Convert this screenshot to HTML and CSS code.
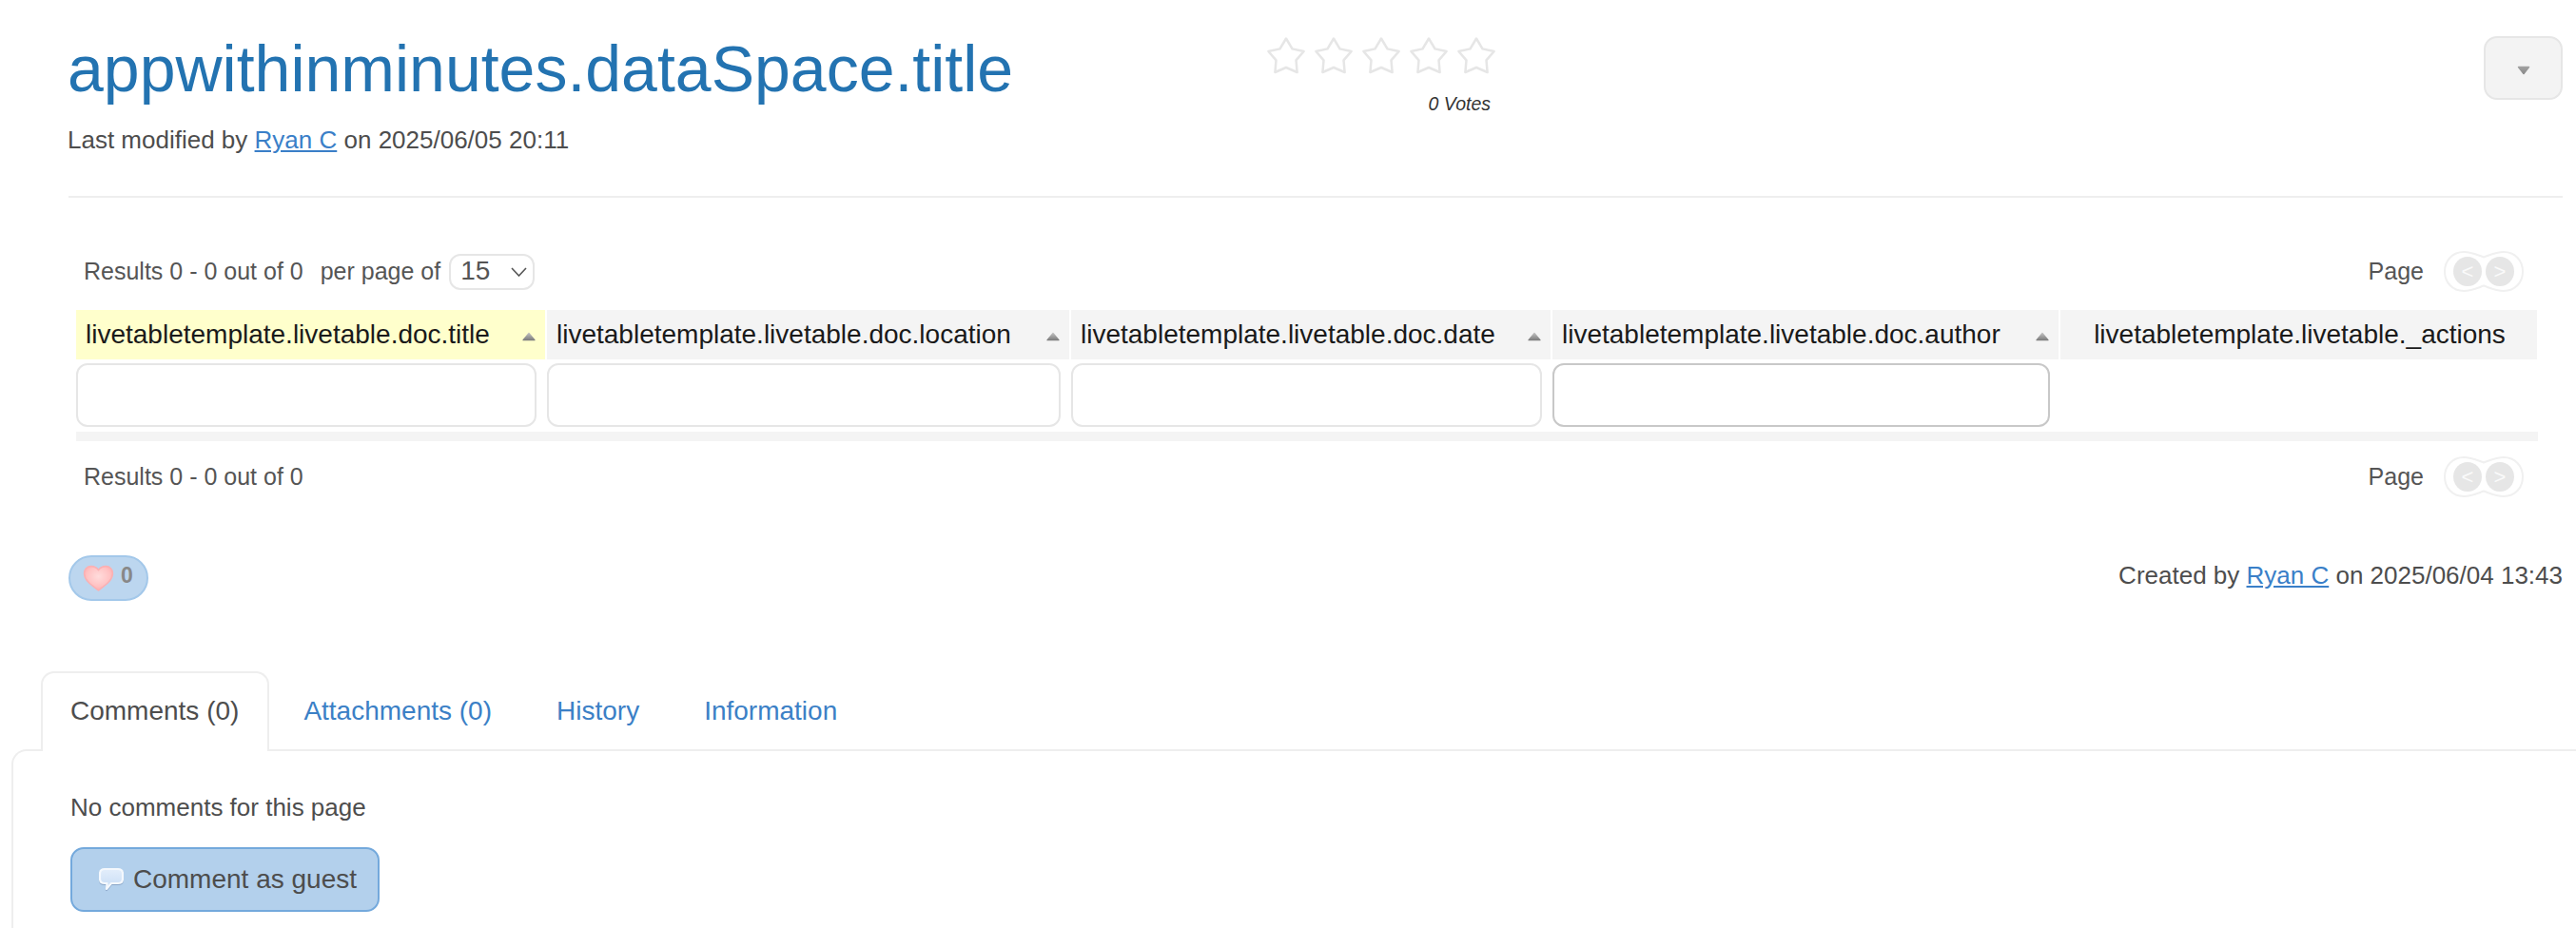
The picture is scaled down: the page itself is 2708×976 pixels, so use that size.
FILE: index.html
```html
<!DOCTYPE html>
<html lang="en">
<head>
<meta charset="utf-8">
<title>appwithinminutes.dataSpace.title</title>
<link rel="stylesheet" href="styles.css">
</head>
<body>
<svg class="defs" width="0" height="0" aria-hidden="true">
  <defs>
    <linearGradient id="sortGrad" x1="0" y1="0" x2="0" y2="1">
      <stop offset="0" stop-color="#bdbdbd"/><stop offset="1" stop-color="#7d7d7d"/>
    </linearGradient>
    <linearGradient id="caretGrad" x1="0" y1="0" x2="0" y2="1">
      <stop offset="0" stop-color="#a0a0a0"/><stop offset="1" stop-color="#8a8a8a"/>
    </linearGradient>
    <radialGradient id="heartGrad" cx="0.5" cy="0.42" r="0.62">
      <stop offset="0" stop-color="#ffdcdc"/><stop offset="0.65" stop-color="#ffc2c3"/><stop offset="1" stop-color="#ffa9ac"/>
    </radialGradient>
    <linearGradient id="bubbleGrad" x1="0" y1="0" x2="0" y2="1">
      <stop offset="0" stop-color="#e3eefb"/><stop offset="1" stop-color="#c7dcf5"/>
    </linearGradient>
    <symbol id="star" viewBox="0 0 42 42">
      <path d="M21 2.5 L27.5 13.4 L39.6 16 L31.5 25.4 L32.6 38 L21 33 L9.4 38 L10.5 25.4 L2.4 16 L14.5 13.4 Z"/>
    </symbol>
    <symbol id="sort" viewBox="0 0 14 10">
      <path d="M7 1.5 L13 8.7 L1 8.7 Z" fill="url(#sortGrad)" stroke="url(#sortGrad)" stroke-width="1.2" stroke-linejoin="round"/>
    </symbol>
    <symbol id="peanut" viewBox="0 0 84 43">
      <path d="M21 1 C29 1 35 4 42 6.5 C49 4 55 1 63 1 C75 1 83 10 83 21.5 C83 33 75 42 63 42 C55 42 49 39 42 36.5 C35 39 29 42 21 42 C9 42 1 33 1 21.5 C1 10 9 1 21 1 Z" fill="#fff" stroke="#f0f0f0" stroke-width="2"/>
    </symbol>
  </defs>
</svg>
<div class="page">
  <header class="head">
    <div class="head-main">
      <h1 class="title">appwithinminutes.dataSpace.title</h1>
      <p class="meta">Last modified by <a class="link" href="#">Ryan C</a> on 2025/06/05 20:11</p>
    </div>
    <div class="rating">
      <div class="stars">
        <svg class="star"><use href="#star"/></svg>
        <svg class="star"><use href="#star"/></svg>
        <svg class="star"><use href="#star"/></svg>
        <svg class="star"><use href="#star"/></svg>
        <svg class="star"><use href="#star"/></svg>
      </div>
      <div class="votes">0 Votes</div>
    </div>
    <button class="menu-btn" type="button" aria-label="menu">
      <svg class="menu-caret" viewBox="0 0 14 10"><path d="M1.5 1.5 L12.5 1.5 L7 8.5 Z" fill="url(#caretGrad)" stroke="url(#caretGrad)" stroke-width="1.5" stroke-linejoin="round"/></svg>
    </button>
  </header>
  <hr class="rule">

  <section class="live">
    <div class="bar">
      <div class="bar-left">
        <span>Results 0 - 0 out of 0</span>
        <span class="perpage">per page of</span>
        <span class="select">15<svg class="chev" viewBox="0 0 17 10"><path d="M1 1 L8.5 9 L16 1" fill="none" stroke="#555" stroke-width="1.6"/></svg></span>
      </div>
      <div class="bar-right">
        <span class="page-label">Page</span>
        <span class="pager">
          <svg class="pager-shape"><use href="#peanut"/></svg>
          <span class="pager-btn">&lt;</span>
          <span class="pager-btn">&gt;</span>
        </span>
      </div>
    </div>

    <div class="grid">
      <div class="th th-first"><span>livetabletemplate.livetable.doc.title</span><svg class="sort"><use href="#sort"/></svg></div>
      <div class="th"><span>livetabletemplate.livetable.doc.location</span><svg class="sort"><use href="#sort"/></svg></div>
      <div class="th"><span>livetabletemplate.livetable.doc.date</span><svg class="sort"><use href="#sort"/></svg></div>
      <div class="th"><span>livetabletemplate.livetable.doc.author</span><svg class="sort"><use href="#sort"/></svg></div>
      <div class="th th-center"><span>livetabletemplate.livetable._actions</span></div>
      <div class="td"><input class="filter" type="text"></div>
      <div class="td"><input class="filter" type="text"></div>
      <div class="td"><input class="filter" type="text"></div>
      <div class="td"><input class="filter filter-focus" type="text"></div>
      <div class="td"></div>
    </div>
    <div class="grid-foot"></div>

    <div class="bar bar-bottom">
      <div class="bar-left"><span>Results 0 - 0 out of 0</span></div>
      <div class="bar-right">
        <span class="page-label">Page</span>
        <span class="pager">
          <svg class="pager-shape"><use href="#peanut"/></svg>
          <span class="pager-btn">&lt;</span>
          <span class="pager-btn">&gt;</span>
        </span>
      </div>
    </div>
  </section>

  <div class="after">
    <span class="like">
      <svg class="heart" viewBox="0 0 32 28"><path d="M16 26 C10 21.5 2 16.5 1.5 9 C1.2 4.5 4.5 1.5 8.5 1.5 C11.8 1.5 14.6 3 16 5.5 C17.4 3 20.2 1.5 23.5 1.5 C27.5 1.5 30.8 4.5 30.5 9 C30 16.5 22 21.5 16 26 Z" fill="url(#heartGrad)" stroke="#fbb0b3" stroke-width="1.5" stroke-linejoin="round"/></svg>
      <span class="like-count">0</span>
    </span>
    <p class="created">Created by <a class="link" href="#">Ryan C</a> on 2025/06/04 13:43</p>
  </div>

  <nav class="tabs">
    <a class="tab tab-active" href="#">Comments (0)</a>
    <a class="tab" href="#">Attachments (0)</a>
    <a class="tab" href="#">History</a>
    <a class="tab" href="#">Information</a>
  </nav>
  <section class="panel">
    <p class="empty">No comments for this page</p>
    <button class="guest" type="button">
      <svg class="bubble" viewBox="0 0 26 26"><path d="M6 2 H20 C23 2 25 4 25 7 V12 C25 15 23 17 20 17 H13 L8 23 L8.5 17 H6 C3 17 1 15 1 12 V7 C1 4 3 2 6 2 Z" fill="url(#bubbleGrad)" stroke="#f4f8fd" stroke-width="2.2" stroke-linejoin="round"/></svg>
      <span>Comment as guest</span>
    </button>
  </section>
</div>
</body>
</html>
```

FILE: styles.css
```css
* { box-sizing: border-box; }
html, body { margin: 0; padding: 0; height: 976px; overflow: hidden; background: #fff; }
body { font-family: "Liberation Sans", Arial, sans-serif; font-size: 25px; color: #4d4d4d; }
.defs { position: absolute; }
.page { height: 976px; overflow: hidden; }
p { margin: 0; }
.link { color: #3a7fc8; text-decoration: underline; }

.head { display: flex; align-items: flex-start; padding: 29px 14px 0 71px; }
.head-main { flex: 0 0 1260px; }
.title { margin: 0; padding-top: 1px; font-size: 68px; font-weight: 400; line-height: 84px; color: #2373b1; white-space: nowrap; }
.meta { margin-top: 16px; font-size: 26px; line-height: 34px; }
.rating { margin-top: 9px; width: 242px; }
.stars { display: flex; justify-content: space-between; height: 42px; }
.star { width: 42px; height: 42px; fill: #fff; stroke: #e6e6e6; stroke-width: 2.5; stroke-linejoin: round; overflow: visible; }
.votes { margin-top: 17px; padding-right: 6px; text-align: right; font-size: 19.5px; font-style: italic; line-height: 24px; color: #333; }
.menu-btn { margin: 9px 0 0 auto; width: 83px; height: 67px; padding: 0; display: flex; align-items: center; justify-content: center; background: #f3f3f3; border: 2px solid #e6e6e6; border-radius: 14px; }
.menu-caret { width: 14px; height: 10px; margin-top: 5px; }

.rule { height: 2px; margin: 42px 14px 0 72px; border: 0; background: #eee; }

.live { margin: 56px 40px 0 80px; }
.bar { display: flex; justify-content: space-between; align-items: center; height: 43px; padding: 0 15px 0 8px; color: #555; }
.bar-left { display: flex; align-items: center; }
.bar-right { display: flex; align-items: center; }
.perpage { margin-left: 18px; }
.select { display: flex; align-items: center; justify-content: space-between; margin-left: 9px; width: 90px; height: 38px; padding: 0 6px 1px 10px; font-size: 28px; background: #fff; border: 2px solid #e6e6e6; border-radius: 12px; }
.chev { width: 17px; height: 10px; margin-top: 1px; }
.page-label { margin-right: 21px; }
.pager { position: relative; display: flex; gap: 4px; width: 84px; height: 43px; padding: 6px 0 0 10px; }
.pager-shape { position: absolute; left: 0; top: 0; width: 84px; height: 43px; }
.pager-btn { position: relative; display: flex; align-items: center; justify-content: center; width: 30px; height: 31px; font-size: 22px; color: #fafafa; background: #e6e6e6; border-radius: 50%; }

.grid { display: grid; grid-template-columns: 493px 549px 504px 532px 501px; column-gap: 2px; margin-top: 19px; }
.th { display: flex; align-items: center; justify-content: space-between; height: 52px; padding: 0 10px; font-size: 28px; color: #1a1a1a; background: #f4f4f4; white-space: nowrap; }
.th-first { background: #ffffcc; }
.th-center { justify-content: center; padding-left: 12px; }
.td { height: 76px; padding: 4px 0 0 0; }
.sort { width: 14px; height: 10px; margin-top: 3px; }
.filter { display: block; width: calc(100% - 9px); height: 67px; padding: 0; background: #fff; border: 2px solid #e6e6e6; border-radius: 12px; outline: 0; }
.filter-focus { border-color: #c8c8c8; }
.grid-foot { height: 10px; background: #f4f4f4; }
.bar-bottom { margin-top: 16px; }

.after { display: flex; align-items: center; justify-content: space-between; margin: 61px 14px 0 72px; height: 48px; }
.like { display: flex; align-items: center; height: 48px; width: 84px; padding-left: 13px; background: #bcd6ef; border: 2px solid #a3c8ea; border-radius: 24px; }
.heart { width: 33px; height: 29px; }
.like-count { margin-left: 7px; margin-top: -6px; font-size: 23px; font-weight: 700; color: #888; }
.created { margin-bottom: 6px; font-size: 26px; }

.tabs { position: relative; z-index: 1; display: flex; margin: 74px 0 0 43px; height: 84px; }
.tab { display: flex; align-items: center; padding: 0 32px 3px; font-size: 28px; color: #3b80c6; text-decoration: none; border: 2px solid transparent; border-bottom: 0; }
.tab-active { padding: 0 30px 3px 29px; margin-right: 2px; color: #4d4d4d; background: #fff; border-color: #eee; border-radius: 14px 14px 0 0; }
.panel { height: 300px; margin: -2px 0 0 12px; padding: 42px 0 0 60px; border-top: 2px solid #eee; border-left: 2px solid #eee; border-radius: 16px 0 0 0; }
.empty { font-size: 26px; line-height: 34px; }
.guest { display: flex; align-items: center; margin-top: 25px; width: 325px; height: 68px; padding: 0 0 0 28px; font: inherit; font-size: 28px; color: #4d4d4d; background: #b3d0ec; border: 2px solid #74a9dc; border-radius: 14px; }
.bubble { width: 26px; height: 26px; margin-right: 10px; filter: drop-shadow(0 1px 0 #8aa6c8); }
```
